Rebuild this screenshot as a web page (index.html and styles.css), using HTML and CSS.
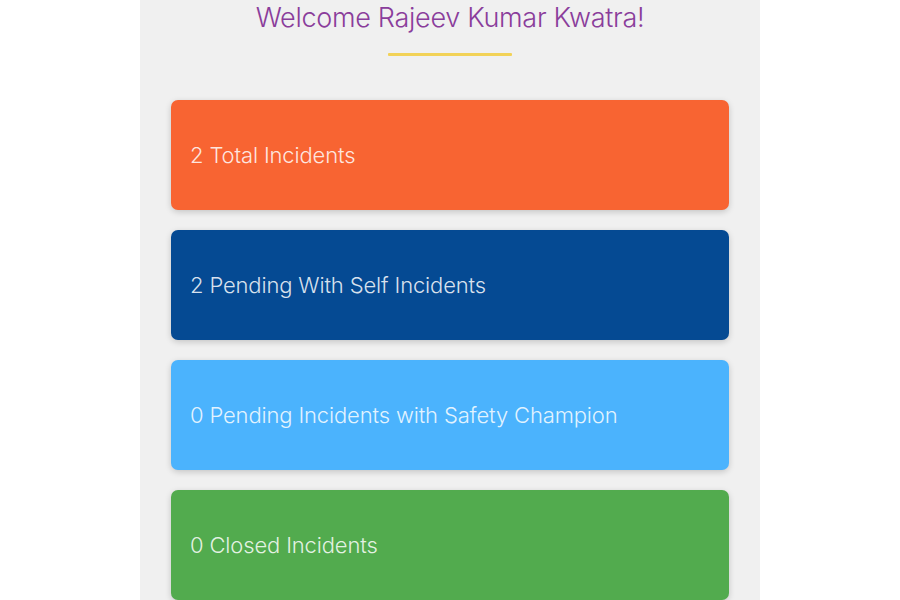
FILE: index.html
```html
<!DOCTYPE html>
<html>
<head>
<meta charset="utf-8">
<link rel="stylesheet" href="styles.css">
</head>
<body>
<div class="panel">
  <h1 class="title">Welcome Rajeev Kumar Kwatra!</h1>
  <div class="rule"></div>
  <div class="cards">
    <div class="card orange">2 Total Incidents</div>
    <div class="card blue">2 Pending With Self Incidents</div>
    <div class="card sky">0 Pending Incidents with Safety Champion</div>
    <div class="card green">0 Closed Incidents</div>
  </div>
</div>
</body>
</html>
```
FILE: styles.css
```css
html, body {
  margin: 0;
  padding: 0;
  background: #ffffff;
  height: 600px;
  overflow: hidden;
}
.panel {
  width: 620px;
  margin: 0 auto;
  background: #f0f0f0;
  height: 600px;
  display: flex;
  flex-direction: column;
  align-items: center;
  font-family: Inter, Roboto, "Liberation Sans", sans-serif;
}
.title {
  margin: 0;
  padding-top: 1px;
  font-size: 27px;
  font-weight: 300;
  line-height: 34px;
  color: #8a3d9b;
  letter-spacing: -0.3px;
}
.rule {
  width: 124px;
  height: 3px;
  background: #f2d257;
  margin-top: 18px;
  border-radius: 1px;
}
.cards {
  align-self: stretch;
  display: flex;
  flex-direction: column;
  gap: 20px;
  padding: 44px 31px 0 31px;
}
.card {
  height: 110px;
  border-radius: 7px;
  box-shadow: 0 2px 6px rgba(0,0,0,0.18);
  display: flex;
  align-items: center;
  padding-left: 19px;
  font-size: 22px;
  font-weight: 300;
  color: rgba(255,255,255,0.85);
  letter-spacing: -0.15px;
}
.orange { background: #f86432; }
.blue { background: #054a93; }
.sky { background: #4bb3fd; }
.green { background: #52ab4e; }
```
